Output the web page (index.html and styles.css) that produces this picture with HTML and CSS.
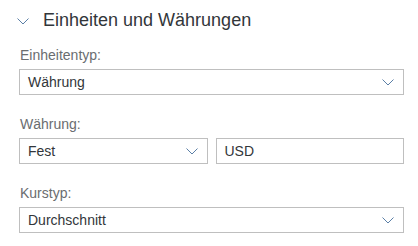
FILE: index.html
```html
<!DOCTYPE html>
<html lang="de">
<head>
<meta charset="utf-8">
<link rel="stylesheet" href="styles.css">
</head>
<body>
<div class="panel">
  <div class="panel-header">
    <svg class="toggle" width="12" height="7" viewBox="0 0 12 7"><path d="M0.5 0.5 L6 6 L11.5 0.5" fill="none" stroke="#5b7fa6" stroke-width="1"/></svg>
    <span class="title">Einheiten und Währungen</span>
  </div>
  <div class="panel-body">
    <div class="field">
      <div class="label">Einheitentyp:</div>
      <div class="select">
        <span class="value">Währung</span>
        <svg class="arrow" width="12" height="7" viewBox="0 0 12 7"><path d="M0.5 0.5 L6 6 L11.5 0.5" fill="none" stroke="#5b7fa6" stroke-width="1"/></svg>
      </div>
    </div>
    <div class="field">
      <div class="label">Währung:</div>
      <div class="row">
        <div class="select">
          <span class="value">Fest</span>
          <svg class="arrow" width="12" height="7" viewBox="0 0 12 7"><path d="M0.5 0.5 L6 6 L11.5 0.5" fill="none" stroke="#5b7fa6" stroke-width="1"/></svg>
        </div>
        <div class="input"><span class="value">USD</span></div>
      </div>
    </div>
    <div class="field">
      <div class="label">Kurstyp:</div>
      <div class="select">
        <span class="value">Durchschnitt</span>
        <svg class="arrow" width="12" height="7" viewBox="0 0 12 7"><path d="M0.5 0.5 L6 6 L11.5 0.5" fill="none" stroke="#5b7fa6" stroke-width="1"/></svg>
      </div>
    </div>
  </div>
</div>
</body>
</html>
```
FILE: styles.css
```css
html, body {
  margin: 0;
  padding: 0;
  background: #ffffff;
}
body {
  font-family: "Liberation Sans", Arial, sans-serif;
  color: #32363a;
}
.panel {
  width: 418px;
}
.panel-header {
  display: flex;
  align-items: center;
  height: 40px;
  padding-left: 17px;
}
.toggle {
  display: block;
  margin-right: 14px;
  margin-top: 2px;
}
.title {
  font-size: 18px;
  color: #32363a;
}
.panel-body {
  padding: 7px 14px 0 19px;
  display: flex;
  flex-direction: column;
  gap: 21px;
}
.label {
  font-size: 14px;
  color: #6a6d70;
  line-height: 16px;
  margin-bottom: 6px;
  padding-left: 1px;
}
.select, .input {
  box-sizing: border-box;
  height: 26px;
  border: 1px solid #bfbfbf;
  display: flex;
  align-items: center;
  padding: 0 9px 0 8px;
  background: #fff;
}
.select {
  justify-content: space-between;
}
.value {
  font-size: 14px;
  color: #32363a;
}
.arrow {
  display: block;
}
.row {
  display: flex;
  gap: 8px;
}
.row > * {
  flex: 1 1 0;
}
```
